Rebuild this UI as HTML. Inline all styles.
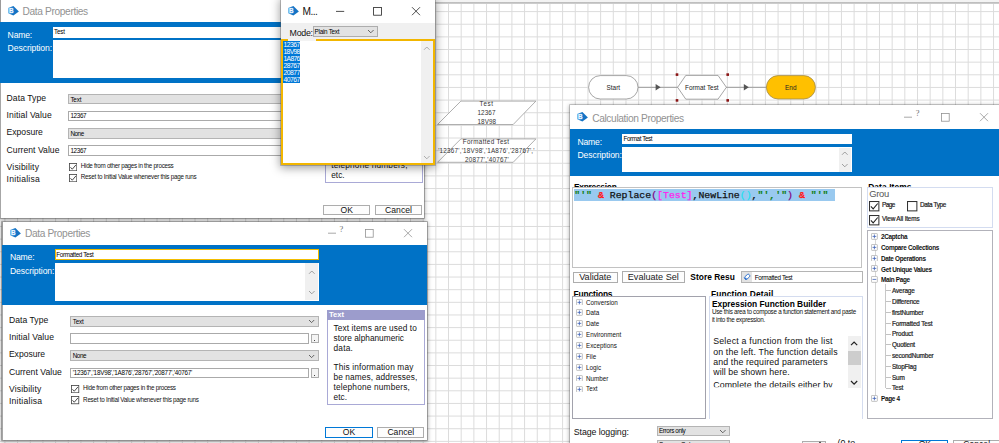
<!DOCTYPE html><html><head><meta charset="utf-8"><title>Blue Prism - Data and Calculation Properties</title><style>
html,body{margin:0;padding:0;}body{width:999px;height:443px;overflow:hidden;position:relative;background:#fff;font-family:'Liberation Sans', sans-serif;}.t{position:absolute;white-space:pre;display:block;}.win{position:absolute;background:#fff;box-shadow:0 0 0 0.8px rgba(90,90,90,.55),0 1px 4px 1px rgba(0,0,0,.32);overflow:hidden;}
</style></head><body>
<svg style="position:absolute;left:0;top:0" width="999" height="443"><path d="M4.90 0V443M17.58 0V443M30.25 0V443M42.93 0V443M55.60 0V443M68.28 0V443M80.95 0V443M93.62 0V443M106.30 0V443M118.97 0V443M131.65 0V443M144.33 0V443M157.00 0V443M169.68 0V443M182.35 0V443M195.03 0V443M207.70 0V443M220.38 0V443M233.05 0V443M245.73 0V443M258.40 0V443M271.08 0V443M283.75 0V443M296.43 0V443M309.10 0V443M321.78 0V443M334.45 0V443M347.13 0V443M359.80 0V443M372.48 0V443M385.15 0V443M397.83 0V443M410.50 0V443M423.18 0V443M435.85 0V443M448.53 0V443M461.20 0V443M473.88 0V443M486.55 0V443M499.23 0V443M511.90 0V443M524.58 0V443M537.25 0V443M549.93 0V443M562.60 0V443M575.28 0V443M587.95 0V443M600.62 0V443M613.30 0V443M625.97 0V443M638.65 0V443M651.32 0V443M664.00 0V443M676.67 0V443M689.35 0V443M702.02 0V443M714.70 0V443M727.37 0V443M740.05 0V443M752.72 0V443M765.40 0V443M778.07 0V443M790.75 0V443M803.42 0V443M816.10 0V443M828.77 0V443M841.45 0V443M854.12 0V443M866.80 0V443M879.47 0V443M892.15 0V443M904.82 0V443M917.50 0V443M930.17 0V443M942.85 0V443M955.52 0V443M968.20 0V443M980.87 0V443M993.55 0V443M0 11.60H999M0 24.24H999M0 36.88H999M0 49.52H999M0 62.16H999M0 74.80H999M0 87.44H999M0 100.08H999M0 112.72H999M0 125.36H999M0 138.00H999M0 150.64H999M0 163.28H999M0 175.92H999M0 188.56H999M0 201.20H999M0 213.84H999M0 226.48H999M0 239.12H999M0 251.76H999M0 264.40H999M0 277.04H999M0 289.68H999M0 302.32H999M0 314.96H999M0 327.60H999M0 340.24H999M0 352.88H999M0 365.52H999M0 378.16H999M0 390.80H999M0 403.44H999M0 416.08H999M0 428.72H999M0 441.36H999" stroke="#dcdcdc" stroke-width="1" fill="none"/></svg>
<div style="position:absolute;left:435px;top:0px;width:564px;height:2px;background:#f3f3f3;"></div>
<div style="position:absolute;left:435px;top:1.9px;width:564px;height:1.7px;background:linear-gradient(#b8b8b8,#d2d2d2);"></div>
<svg style="position:absolute;left:0;top:0" width="999" height="443"><line x1="638" y1="87.3" x2="678" y2="87.3" stroke="#8a8a8a" stroke-width="0.8"/><line x1="726" y1="87.3" x2="767" y2="87.3" stroke="#8a8a8a" stroke-width="0.8"/><polygon points="655.6,84 660.6,87.3 655.6,90.6" fill="#555"/><polygon points="743.8,84 748.8,87.3 743.8,90.6" fill="#555"/><rect x="588.6" y="75.6" width="49.4" height="23.4" rx="11.7" fill="#fff" stroke="#8f8f8f" stroke-width="0.8"/><polygon points="677.6,87.3 685.8,75.4 718,75.4 726.4,87.3 718,99.2 685.8,99.2" fill="#fff" stroke="#8f8f8f" stroke-width="0.8"/><rect x="675.7" y="73.3" width="2.6" height="2.6" fill="#8b1515"/><rect x="726.4000000000001" y="73.3" width="2.6" height="2.6" fill="#8b1515"/><rect x="675.7" y="99.10000000000001" width="2.6" height="2.6" fill="#8b1515"/><rect x="726.4000000000001" y="99.10000000000001" width="2.6" height="2.6" fill="#8b1515"/><rect x="766.4" y="75.6" width="49" height="23.4" rx="11.7" fill="#ffc000" stroke="#a08a50" stroke-width="0.8"/><polygon points="460.9,101.1 535.9,101.1 513.2,124.5 437.5,124.5" fill="#fff" stroke="#9a9a9a" stroke-width="0.8"/><polygon points="460.9,138.9 535.9,138.9 513.2,162.3 437.5,162.3" fill="#fff" stroke="#9a9a9a" stroke-width="0.8"/></svg>
<span class="t" style="left:613.3px;top:82.60px;line-height:10px;font-size:6.4px;color:#222;font-family:'Liberation Sans', sans-serif;transform:translateX(-50%);">Start</span>
<span class="t" style="left:701.8px;top:82.60px;line-height:10px;font-size:6.4px;color:#222;font-family:'Liberation Sans', sans-serif;transform:translateX(-50%);">Format Test</span>
<span class="t" style="left:790.8px;top:82.60px;line-height:10px;font-size:6.4px;color:#222;font-family:'Liberation Sans', sans-serif;transform:translateX(-50%);">End</span>
<span class="t" style="left:479.6px;top:98.60px;line-height:10px;font-size:6.3px;color:#333;font-family:'Liberation Sans', sans-serif;letter-spacing:0.659px;">Test</span>
<span class="t" style="left:477.4px;top:107.80px;line-height:10px;font-size:6.3px;color:#333;font-family:'Liberation Sans', sans-serif;letter-spacing:0.137px;">12367</span>
<span class="t" style="left:477.4px;top:116.90px;line-height:10px;font-size:6.3px;color:#333;font-family:'Liberation Sans', sans-serif;letter-spacing:0.116px;">18V98</span>
<span class="t" style="left:462.8px;top:136.60px;line-height:10px;font-size:6.3px;color:#333;font-family:'Liberation Sans', sans-serif;letter-spacing:0.336px;">Formatted Test</span>
<span class="t" style="left:438.2px;top:145.80px;line-height:10px;font-size:6.3px;color:#333;font-family:'Liberation Sans', sans-serif;letter-spacing:0.222px;">'12367','18V98','1A876','28767','</span>
<span class="t" style="left:465.0px;top:155.00px;line-height:10px;font-size:6.3px;color:#333;font-family:'Liberation Sans', sans-serif;letter-spacing:0.258px;">20877','40767'</span>
<div class="win" style="left:0px;top:0px;width:424.3px;height:218px;">
<svg style="position:absolute;left:7.5px;top:5.6px" width="11" height="10" viewBox="0 0 11 10"><defs><linearGradient id="ig1" x1="0" x2="1" y1="0" y2="0"><stop offset="0" stop-color="#74b6ea"/><stop offset="1" stop-color="#3089d6"/></linearGradient></defs><polygon points="1.6,1.5 5.4,0 10.9,5.5 5.4,9.6 1.4,7.7" fill="#1473c4"/><rect x="0.1" y="1.5" width="5.6" height="6.3" rx="1.2" fill="url(#ig1)"/><text x="0.9" y="6.9" font-size="6.4" font-weight="bold" font-family="Liberation Sans, sans-serif" fill="#f4faff">B</text></svg>
<span class="t" style="left:22.6px;top:3.70px;line-height:15px;font-size:10.2px;color:#929292;font-family:'Liberation Sans', sans-serif;letter-spacing:-0.372px;">Data Properties</span>
<svg style="position:absolute;left:326px;top:6.6px;overflow:visible" width="90" height="10"><line x1="0" y1="4.2" x2="8" y2="4.2" stroke="#8c8c8c" stroke-width="0.75"/><rect x="37.4" y="0.4" width="7.8" height="7.8" fill="none" stroke="#8c8c8c" stroke-width="0.75"/><path d="M76 0.2 L84 8.2 M84 0.2 L76 8.2" stroke="#8c8c8c" stroke-width="0.75" fill="none"/></svg>
<span class="t" style="left:337.3px;top:0.70px;line-height:13px;font-size:8.4px;color:#6a6a6a;font-family:'Liberation Serif', serif;">?</span>
<div style="position:absolute;left:0px;top:22.4px;width:424.3px;height:60.4px;background:#0072c6;"></div>
<span class="t" style="left:7.6px;top:28.80px;line-height:13px;font-size:8.6px;color:#fff;font-family:'Liberation Sans', sans-serif;letter-spacing:-0.163px;">Name:</span>
<span class="t" style="left:7.6px;top:42.30px;line-height:13px;font-size:8.6px;color:#fff;font-family:'Liberation Sans', sans-serif;letter-spacing:-0.073px;">Description:</span>
<div style="position:absolute;left:52.5px;top:26.8px;width:264px;height:10.9px;background:#fff;"></div>
<span class="t" style="left:54px;top:27.40px;line-height:10px;font-size:6.3px;color:#000;font-family:'Liberation Sans', sans-serif;letter-spacing:-0.216px;">Test</span>
<div style="position:absolute;left:52.5px;top:40.2px;width:264px;height:38.2px;background:#fff;"></div>
<div style="position:absolute;left:303px;top:41px;width:13px;height:36.6px;background:#f0f0f0;"></div>
<svg style="position:absolute;left:306.6px;top:48.4px;overflow:visible" width="5.6" height="2.8"><polyline points="0,2.8 2.8,0 5.6,2.8" fill="none" stroke="#8a8a8a" stroke-width="0.8"/></svg>
<svg style="position:absolute;left:306.6px;top:68.4px;overflow:visible" width="5.6" height="2.8"><polyline points="0,0 2.8,2.8 5.6,0" fill="none" stroke="#8a8a8a" stroke-width="0.8"/></svg>
<span class="t" style="left:6.6px;top:92.00px;line-height:13px;font-size:8.6px;color:#111;font-family:'Liberation Sans', sans-serif;letter-spacing:0.054px;">Data Type</span>
<div style="position:absolute;left:68px;top:93.9px;width:248.4px;height:10.6px;box-sizing:border-box;border:0.8px solid #b4b4b4;background:#e2e2e2;"></div>
<svg style="position:absolute;left:306.6px;top:98.10000000000001px;overflow:visible" width="5.2" height="2.6"><polyline points="0,0 2.6,2.6 5.2,0" fill="none" stroke="#444" stroke-width="0.8"/></svg>
<span class="t" style="left:70.4px;top:94.50px;line-height:10px;font-size:6.3px;color:#000;font-family:'Liberation Sans', sans-serif;letter-spacing:-0.166px;">Text</span>
<span class="t" style="left:6.6px;top:108.90px;line-height:13px;font-size:8.6px;color:#111;font-family:'Liberation Sans', sans-serif;letter-spacing:0.108px;">Initial Value</span>
<div style="position:absolute;left:68px;top:110.8px;width:238.6px;height:10.6px;box-sizing:border-box;border:0.8px solid #aaaaaa;background:#fff;"></div>
<div style="position:absolute;left:309px;top:111.39999999999999px;width:7.4px;height:9.6px;box-sizing:border-box;border:0.8px solid #adadad;background:#f4f4f4;"></div>
<div style="position:absolute;left:312.2px;top:117.8px;width:1px;height:1px;background:#444;"></div>
<span class="t" style="left:70.4px;top:111.40px;line-height:10px;font-size:6.3px;color:#000;font-family:'Liberation Sans', sans-serif;letter-spacing:-0.323px;">12367</span>
<span class="t" style="left:6.6px;top:126.10px;line-height:13px;font-size:8.6px;color:#111;font-family:'Liberation Sans', sans-serif;letter-spacing:-0.014px;">Exposure</span>
<div style="position:absolute;left:68px;top:128.0px;width:248.4px;height:10.6px;box-sizing:border-box;border:0.8px solid #b4b4b4;background:#e2e2e2;"></div>
<svg style="position:absolute;left:306.6px;top:132.2px;overflow:visible" width="5.2" height="2.6"><polyline points="0,0 2.6,2.6 5.2,0" fill="none" stroke="#444" stroke-width="0.8"/></svg>
<span class="t" style="left:70.4px;top:128.60px;line-height:10px;font-size:6.3px;color:#000;font-family:'Liberation Sans', sans-serif;letter-spacing:-0.416px;">None</span>
<span class="t" style="left:6.6px;top:143.50px;line-height:13px;font-size:8.6px;color:#111;font-family:'Liberation Sans', sans-serif;letter-spacing:0.039px;">Current Value</span>
<div style="position:absolute;left:68px;top:145.4px;width:238.6px;height:10.6px;box-sizing:border-box;border:0.8px solid #aaaaaa;background:#fff;"></div>
<div style="position:absolute;left:309px;top:146.0px;width:7.4px;height:9.6px;box-sizing:border-box;border:0.8px solid #adadad;background:#f4f4f4;"></div>
<div style="position:absolute;left:312.2px;top:152.4px;width:1px;height:1px;background:#444;"></div>
<span class="t" style="left:70.4px;top:146.00px;line-height:10px;font-size:6.3px;color:#000;font-family:'Liberation Sans', sans-serif;letter-spacing:-0.323px;">12367</span>
<span class="t" style="left:6.6px;top:161.10px;line-height:13px;font-size:8.6px;color:#111;font-family:'Liberation Sans', sans-serif;letter-spacing:0.161px;">Visibility</span>
<span class="t" style="left:6.6px;top:172.70px;line-height:13px;font-size:8.6px;color:#111;font-family:'Liberation Sans', sans-serif;letter-spacing:0.244px;">Initialisa</span>
<svg style="position:absolute;left:69.1px;top:162.5px" width="8.2" height="8.2" viewBox="0 0 10 10"><rect x="0.5" y="0.5" width="9" height="9" fill="#fff" stroke="#444" stroke-width="1"/><polyline points="1.8,5.2 4,7.6 8.4,2.4" fill="none" stroke="#222" stroke-width="1"/></svg>
<svg style="position:absolute;left:69.1px;top:174.1px" width="8.2" height="8.2" viewBox="0 0 10 10"><rect x="0.5" y="0.5" width="9" height="9" fill="#fff" stroke="#444" stroke-width="1"/><polyline points="1.8,5.2 4,7.6 8.4,2.4" fill="none" stroke="#222" stroke-width="1"/></svg>
<span class="t" style="left:80.8px;top:160.80px;line-height:10px;font-size:6.3px;color:#111;font-family:'Liberation Sans', sans-serif;letter-spacing:-0.296px;">Hide from other pages in the process</span>
<span class="t" style="left:80.8px;top:172.40px;line-height:10px;font-size:6.3px;color:#111;font-family:'Liberation Sans', sans-serif;letter-spacing:-0.262px;">Reset to Initial Value whenever this page runs</span>
<div style="position:absolute;left:0px;top:0px;width:1px;height:22.4px;background:#9a9a9a;"></div>
<div style="position:absolute;left:0px;top:82.8px;width:1px;height:218px;background:#a6a6a6;"></div>
<div style="position:absolute;left:325px;top:88px;width:97.6px;height:94.5px;box-sizing:border-box;border:0.8px solid #a9a9d6;background:#fff;"></div>
<div style="position:absolute;left:325px;top:88px;width:97.6px;height:9.6px;background:#9c9ccc;"></div>
<span class="t" style="left:326.6px;top:87.00px;line-height:12px;font-size:7.6px;color:#fff;font-family:'Liberation Sans', sans-serif;font-weight:bold;">Text</span>
<span class="t" style="left:331.2px;top:99.50px;line-height:13px;font-size:8.3px;color:#111;font-family:'Liberation Sans', sans-serif;letter-spacing:0.106px;">Text items are used to</span>
<span class="t" style="left:331.2px;top:109.36px;line-height:13px;font-size:8.3px;color:#111;font-family:'Liberation Sans', sans-serif;letter-spacing:-0.003px;">store alphanumeric</span>
<span class="t" style="left:331.2px;top:119.22px;line-height:13px;font-size:8.3px;color:#111;font-family:'Liberation Sans', sans-serif;letter-spacing:0.206px;">data.</span>
<span class="t" style="left:331.2px;top:138.94px;line-height:13px;font-size:8.3px;color:#111;font-family:'Liberation Sans', sans-serif;letter-spacing:0.149px;">This information may</span>
<span class="t" style="left:331.2px;top:148.80px;line-height:13px;font-size:8.3px;color:#111;font-family:'Liberation Sans', sans-serif;letter-spacing:0.118px;">be names, addresses,</span>
<span class="t" style="left:331.2px;top:158.66px;line-height:13px;font-size:8.3px;color:#111;font-family:'Liberation Sans', sans-serif;letter-spacing:0.175px;">telephone numbers,</span>
<span class="t" style="left:331.2px;top:168.52px;line-height:13px;font-size:8.3px;color:#111;font-family:'Liberation Sans', sans-serif;letter-spacing:0.031px;">etc.</span>
<div style="position:absolute;left:323px;top:204.6px;width:47.4px;height:10.8px;box-sizing:border-box;border:0.8px solid #adadad;background:#fdfdfd;"></div>
<div style="position:absolute;left:375px;top:204.6px;width:47px;height:10.8px;box-sizing:border-box;border:0.8px solid #adadad;background:#fdfdfd;"></div>
<span class="t" style="left:346.7px;top:203.70px;line-height:13px;font-size:8.6px;color:#111;font-family:'Liberation Sans', sans-serif;transform:translateX(-50%);">OK</span>
<span class="t" style="left:398.5px;top:203.70px;line-height:13px;font-size:8.6px;color:#111;font-family:'Liberation Sans', sans-serif;transform:translateX(-50%);">Cancel</span>
</div>
<div class="win" style="left:281px;top:-2px;width:154px;height:167px;box-shadow:0 0 0 0.8px rgba(90,90,90,.45),0 2px 9px 1px rgba(0,0,0,.38);">
<svg style="position:absolute;left:7.2px;top:8.3px" width="11" height="10" viewBox="0 0 11 10"><defs><linearGradient id="ig2" x1="0" x2="1" y1="0" y2="0"><stop offset="0" stop-color="#74b6ea"/><stop offset="1" stop-color="#3089d6"/></linearGradient></defs><polygon points="1.6,1.5 5.4,0 10.9,5.5 5.4,9.6 1.4,7.7" fill="#1473c4"/><rect x="0.1" y="1.5" width="5.6" height="6.3" rx="1.2" fill="url(#ig2)"/><text x="0.9" y="6.9" font-size="6.4" font-weight="bold" font-family="Liberation Sans, sans-serif" fill="#f4faff">B</text></svg>
<span class="t" style="left:21.6px;top:6.30px;line-height:15px;font-size:10.2px;color:#111;font-family:'Liberation Sans', sans-serif;letter-spacing:-0.546px;">M...</span>
<svg style="position:absolute;left:55px;top:8.8px;overflow:visible" width="90" height="10"><line x1="0" y1="4.4" x2="8.2" y2="4.4" stroke="#222" stroke-width="0.8"/><rect x="37.6" y="0.4" width="7.8" height="7.8" fill="none" stroke="#222" stroke-width="0.8"/><path d="M76 0.2 L84 8.2 M84 0.2 L76 8.2" stroke="#222" stroke-width="0.8" fill="none"/></svg>
<div style="position:absolute;left:0px;top:25px;width:154px;height:17px;background:#f0f0f0;"></div>
<span class="t" style="left:8.6px;top:29.40px;line-height:13px;font-size:8.8px;color:#111;font-family:'Liberation Sans', sans-serif;letter-spacing:-0.251px;">Mode:</span>
<div style="position:absolute;left:31.8px;top:28px;width:65px;height:11.2px;box-sizing:border-box;border:0.8px solid #adadad;background:#e2e2e2;"></div>
<span class="t" style="left:33.6px;top:29.20px;line-height:10px;font-size:6.3px;color:#000;font-family:'Liberation Sans', sans-serif;letter-spacing:-0.259px;">Plain Text</span>
<svg style="position:absolute;left:87.4px;top:32.4px;overflow:visible" width="5.6" height="2.8"><polyline points="0,0 2.8,2.8 5.6,0" fill="none" stroke="#444" stroke-width="0.8"/></svg>
<div style="position:absolute;left:0px;top:41px;width:154px;height:126px;box-sizing:border-box;border:2px solid #f2b600;background:#fff;"></div>
<div style="position:absolute;left:7px;top:41px;width:28px;height:2px;background:#f3f3f3;"></div>
<div style="position:absolute;left:139.6px;top:43px;width:12.4px;height:122.4px;background:#f0f0f0;"></div>
<svg style="position:absolute;left:143px;top:48.6px;overflow:visible" width="5.6" height="2.8"><polyline points="0,2.8 2.8,0 5.6,2.8" fill="none" stroke="#9a9a9a" stroke-width="0.8"/></svg>
<svg style="position:absolute;left:143px;top:157.6px;overflow:visible" width="5.6" height="2.8"><polyline points="0,0 2.8,2.8 5.6,0" fill="none" stroke="#9a9a9a" stroke-width="0.8"/></svg>
<div style="position:absolute;left:2px;top:43.0px;width:17.4px;height:7.0px;background:#0078d7;"></div>
<span class="t" style="left:2.5px;top:41.40px;line-height:11px;font-size:6.8px;color:#fff;font-family:'Liberation Sans', sans-serif;letter-spacing:-0.541px;">12367</span>
<div style="position:absolute;left:2px;top:50.0px;width:17.4px;height:7.0px;background:#0078d7;"></div>
<span class="t" style="left:2.5px;top:48.40px;line-height:11px;font-size:6.8px;color:#fff;font-family:'Liberation Sans', sans-serif;letter-spacing:-0.691px;">18V98</span>
<div style="position:absolute;left:2px;top:57.0px;width:17.4px;height:7.0px;background:#0078d7;"></div>
<span class="t" style="left:2.5px;top:55.40px;line-height:11px;font-size:6.8px;color:#fff;font-family:'Liberation Sans', sans-serif;letter-spacing:-0.691px;">1A876</span>
<div style="position:absolute;left:2px;top:64.0px;width:17.4px;height:7.0px;background:#0078d7;"></div>
<span class="t" style="left:2.5px;top:62.40px;line-height:11px;font-size:6.8px;color:#fff;font-family:'Liberation Sans', sans-serif;letter-spacing:-0.541px;">28767</span>
<div style="position:absolute;left:2px;top:71.0px;width:17.4px;height:7.0px;background:#0078d7;"></div>
<span class="t" style="left:2.5px;top:69.40px;line-height:11px;font-size:6.8px;color:#fff;font-family:'Liberation Sans', sans-serif;letter-spacing:-0.541px;">20877</span>
<div style="position:absolute;left:2px;top:78.0px;width:17.4px;height:7.0px;background:#0078d7;"></div>
<span class="t" style="left:2.5px;top:76.40px;line-height:11px;font-size:6.8px;color:#fff;font-family:'Liberation Sans', sans-serif;letter-spacing:-0.541px;">40767</span>
</div>
<div class="win" style="left:2.3px;top:222.4px;width:424.3px;height:218px;">
<svg style="position:absolute;left:7.5px;top:5.6px" width="11" height="10" viewBox="0 0 11 10"><defs><linearGradient id="ig3" x1="0" x2="1" y1="0" y2="0"><stop offset="0" stop-color="#74b6ea"/><stop offset="1" stop-color="#3089d6"/></linearGradient></defs><polygon points="1.6,1.5 5.4,0 10.9,5.5 5.4,9.6 1.4,7.7" fill="#1473c4"/><rect x="0.1" y="1.5" width="5.6" height="6.3" rx="1.2" fill="url(#ig3)"/><text x="0.9" y="6.9" font-size="6.4" font-weight="bold" font-family="Liberation Sans, sans-serif" fill="#f4faff">B</text></svg>
<span class="t" style="left:22.6px;top:3.70px;line-height:15px;font-size:10.2px;color:#929292;font-family:'Liberation Sans', sans-serif;letter-spacing:-0.372px;">Data Properties</span>
<svg style="position:absolute;left:326px;top:6.6px;overflow:visible" width="90" height="10"><line x1="0" y1="4.2" x2="8" y2="4.2" stroke="#8c8c8c" stroke-width="0.75"/><rect x="37.4" y="0.4" width="7.8" height="7.8" fill="none" stroke="#8c8c8c" stroke-width="0.75"/><path d="M76 0.2 L84 8.2 M84 0.2 L76 8.2" stroke="#8c8c8c" stroke-width="0.75" fill="none"/></svg>
<span class="t" style="left:337.3px;top:0.70px;line-height:13px;font-size:8.4px;color:#6a6a6a;font-family:'Liberation Serif', serif;">?</span>
<div style="position:absolute;left:0px;top:22.4px;width:424.3px;height:60.4px;background:#0072c6;"></div>
<span class="t" style="left:7.6px;top:28.80px;line-height:13px;font-size:8.6px;color:#fff;font-family:'Liberation Sans', sans-serif;letter-spacing:-0.163px;">Name:</span>
<span class="t" style="left:7.6px;top:42.30px;line-height:13px;font-size:8.6px;color:#fff;font-family:'Liberation Sans', sans-serif;letter-spacing:-0.073px;">Description:</span>
<div style="position:absolute;left:52.3px;top:26.5px;width:264.4px;height:11.5px;box-sizing:border-box;border:1.6px solid #f2bd00;background:#fff;"></div>
<span class="t" style="left:54px;top:27.40px;line-height:10px;font-size:6.3px;color:#000;font-family:'Liberation Sans', sans-serif;letter-spacing:-0.335px;">Formatted Test</span>
<div style="position:absolute;left:52.5px;top:40.2px;width:264px;height:38.2px;background:#fff;"></div>
<div style="position:absolute;left:303px;top:41px;width:13px;height:36.6px;background:#f0f0f0;"></div>
<svg style="position:absolute;left:306.6px;top:48.4px;overflow:visible" width="5.6" height="2.8"><polyline points="0,2.8 2.8,0 5.6,2.8" fill="none" stroke="#8a8a8a" stroke-width="0.8"/></svg>
<svg style="position:absolute;left:306.6px;top:68.4px;overflow:visible" width="5.6" height="2.8"><polyline points="0,0 2.8,2.8 5.6,0" fill="none" stroke="#8a8a8a" stroke-width="0.8"/></svg>
<span class="t" style="left:6.6px;top:92.00px;line-height:13px;font-size:8.6px;color:#111;font-family:'Liberation Sans', sans-serif;letter-spacing:0.054px;">Data Type</span>
<div style="position:absolute;left:68px;top:93.9px;width:248.4px;height:10.6px;box-sizing:border-box;border:0.8px solid #b4b4b4;background:#e2e2e2;"></div>
<svg style="position:absolute;left:306.6px;top:98.10000000000001px;overflow:visible" width="5.2" height="2.6"><polyline points="0,0 2.6,2.6 5.2,0" fill="none" stroke="#444" stroke-width="0.8"/></svg>
<span class="t" style="left:70.4px;top:94.50px;line-height:10px;font-size:6.3px;color:#000;font-family:'Liberation Sans', sans-serif;letter-spacing:-0.166px;">Text</span>
<span class="t" style="left:6.6px;top:108.90px;line-height:13px;font-size:8.6px;color:#111;font-family:'Liberation Sans', sans-serif;letter-spacing:0.108px;">Initial Value</span>
<div style="position:absolute;left:68px;top:110.8px;width:238.6px;height:10.6px;box-sizing:border-box;border:0.8px solid #aaaaaa;background:#fff;"></div>
<div style="position:absolute;left:309px;top:111.39999999999999px;width:7.4px;height:9.6px;box-sizing:border-box;border:0.8px solid #adadad;background:#f4f4f4;"></div>
<div style="position:absolute;left:312.2px;top:117.8px;width:1px;height:1px;background:#444;"></div>
<span class="t" style="left:6.6px;top:126.10px;line-height:13px;font-size:8.6px;color:#111;font-family:'Liberation Sans', sans-serif;letter-spacing:-0.014px;">Exposure</span>
<div style="position:absolute;left:68px;top:128.0px;width:248.4px;height:10.6px;box-sizing:border-box;border:0.8px solid #b4b4b4;background:#e2e2e2;"></div>
<svg style="position:absolute;left:306.6px;top:132.2px;overflow:visible" width="5.2" height="2.6"><polyline points="0,0 2.6,2.6 5.2,0" fill="none" stroke="#444" stroke-width="0.8"/></svg>
<span class="t" style="left:70.4px;top:128.60px;line-height:10px;font-size:6.3px;color:#000;font-family:'Liberation Sans', sans-serif;letter-spacing:-0.416px;">None</span>
<span class="t" style="left:6.6px;top:143.50px;line-height:13px;font-size:8.6px;color:#111;font-family:'Liberation Sans', sans-serif;letter-spacing:0.039px;">Current Value</span>
<div style="position:absolute;left:68px;top:145.4px;width:238.6px;height:10.6px;box-sizing:border-box;border:0.8px solid #aaaaaa;background:#fff;"></div>
<div style="position:absolute;left:309px;top:146.0px;width:7.4px;height:9.6px;box-sizing:border-box;border:0.8px solid #adadad;background:#f4f4f4;"></div>
<div style="position:absolute;left:312.2px;top:152.4px;width:1px;height:1px;background:#444;"></div>
<span class="t" style="left:70.4px;top:146.00px;line-height:10px;font-size:6.3px;color:#000;font-family:'Liberation Sans', sans-serif;letter-spacing:-0.218px;">'12367','18V98','1A876','28767','20877','40767'</span>
<span class="t" style="left:6.6px;top:161.10px;line-height:13px;font-size:8.6px;color:#111;font-family:'Liberation Sans', sans-serif;letter-spacing:0.161px;">Visibility</span>
<span class="t" style="left:6.6px;top:172.70px;line-height:13px;font-size:8.6px;color:#111;font-family:'Liberation Sans', sans-serif;letter-spacing:0.244px;">Initialisa</span>
<svg style="position:absolute;left:69.1px;top:162.5px" width="8.2" height="8.2" viewBox="0 0 10 10"><rect x="0.5" y="0.5" width="9" height="9" fill="#fff" stroke="#444" stroke-width="1"/><polyline points="1.8,5.2 4,7.6 8.4,2.4" fill="none" stroke="#222" stroke-width="1"/></svg>
<svg style="position:absolute;left:69.1px;top:174.1px" width="8.2" height="8.2" viewBox="0 0 10 10"><rect x="0.5" y="0.5" width="9" height="9" fill="#fff" stroke="#444" stroke-width="1"/><polyline points="1.8,5.2 4,7.6 8.4,2.4" fill="none" stroke="#222" stroke-width="1"/></svg>
<span class="t" style="left:80.8px;top:160.80px;line-height:10px;font-size:6.3px;color:#111;font-family:'Liberation Sans', sans-serif;letter-spacing:-0.296px;">Hide from other pages in the process</span>
<span class="t" style="left:80.8px;top:172.40px;line-height:10px;font-size:6.3px;color:#111;font-family:'Liberation Sans', sans-serif;letter-spacing:-0.262px;">Reset to Initial Value whenever this page runs</span>
<div style="position:absolute;left:0px;top:0px;width:1px;height:22.4px;background:#9a9a9a;"></div>
<div style="position:absolute;left:0px;top:82.8px;width:1px;height:218px;background:#a6a6a6;"></div>
<div style="position:absolute;left:325px;top:88px;width:97.6px;height:94.5px;box-sizing:border-box;border:0.8px solid #a9a9d6;background:#fff;"></div>
<div style="position:absolute;left:325px;top:88px;width:97.6px;height:9.6px;background:#9c9ccc;"></div>
<span class="t" style="left:326.6px;top:87.00px;line-height:12px;font-size:7.6px;color:#fff;font-family:'Liberation Sans', sans-serif;font-weight:bold;">Text</span>
<span class="t" style="left:331.2px;top:99.50px;line-height:13px;font-size:8.3px;color:#111;font-family:'Liberation Sans', sans-serif;letter-spacing:0.106px;">Text items are used to</span>
<span class="t" style="left:331.2px;top:109.36px;line-height:13px;font-size:8.3px;color:#111;font-family:'Liberation Sans', sans-serif;letter-spacing:-0.003px;">store alphanumeric</span>
<span class="t" style="left:331.2px;top:119.22px;line-height:13px;font-size:8.3px;color:#111;font-family:'Liberation Sans', sans-serif;letter-spacing:0.206px;">data.</span>
<span class="t" style="left:331.2px;top:138.94px;line-height:13px;font-size:8.3px;color:#111;font-family:'Liberation Sans', sans-serif;letter-spacing:0.149px;">This information may</span>
<span class="t" style="left:331.2px;top:148.80px;line-height:13px;font-size:8.3px;color:#111;font-family:'Liberation Sans', sans-serif;letter-spacing:0.118px;">be names, addresses,</span>
<span class="t" style="left:331.2px;top:158.66px;line-height:13px;font-size:8.3px;color:#111;font-family:'Liberation Sans', sans-serif;letter-spacing:0.175px;">telephone numbers,</span>
<span class="t" style="left:331.2px;top:168.52px;line-height:13px;font-size:8.3px;color:#111;font-family:'Liberation Sans', sans-serif;letter-spacing:0.031px;">etc.</span>
<div style="position:absolute;left:323px;top:204.6px;width:47.4px;height:10.8px;box-sizing:border-box;border:1.2px solid #0078d7;background:#fdfdfd;"></div>
<div style="position:absolute;left:375px;top:204.6px;width:47px;height:10.8px;box-sizing:border-box;border:0.8px solid #adadad;background:#fdfdfd;"></div>
<span class="t" style="left:346.7px;top:203.70px;line-height:13px;font-size:8.6px;color:#111;font-family:'Liberation Sans', sans-serif;transform:translateX(-50%);">OK</span>
<span class="t" style="left:398.5px;top:203.70px;line-height:13px;font-size:8.6px;color:#111;font-family:'Liberation Sans', sans-serif;transform:translateX(-50%);">Cancel</span>
</div>
<div class="win" style="left:569.8px;top:105.0px;width:440px;height:345px;box-shadow:0 0 0 0.8px rgba(90,90,90,.35),0 1px 4px 1px rgba(0,0,0,.28);">
<svg style="position:absolute;left:7.2px;top:7.2px" width="11" height="10" viewBox="0 0 11 10"><defs><linearGradient id="ig4" x1="0" x2="1" y1="0" y2="0"><stop offset="0" stop-color="#74b6ea"/><stop offset="1" stop-color="#3089d6"/></linearGradient></defs><polygon points="1.6,1.5 5.4,0 10.9,5.5 5.4,9.6 1.4,7.7" fill="#1473c4"/><rect x="0.1" y="1.5" width="5.6" height="6.3" rx="1.2" fill="url(#ig4)"/><text x="0.9" y="6.9" font-size="6.4" font-weight="bold" font-family="Liberation Sans, sans-serif" fill="#f4faff">B</text></svg>
<span class="t" style="left:22.4px;top:6.20px;line-height:15px;font-size:10.2px;color:#929292;font-family:'Liberation Sans', sans-serif;letter-spacing:-0.367px;">Calculation Properties</span>
<svg style="position:absolute;left:334.6px;top:8.0px;overflow:visible" width="90" height="10"><line x1="0" y1="4.2" x2="8" y2="4.2" stroke="#8c8c8c" stroke-width="0.75"/><rect x="37.4" y="0.4" width="7.8" height="7.8" fill="none" stroke="#8c8c8c" stroke-width="0.75"/><path d="M76 0.2 L84 8.2 M84 0.2 L76 8.2" stroke="#8c8c8c" stroke-width="0.75" fill="none"/></svg>
<span class="t" style="left:345.90000000000003px;top:2.10px;line-height:13px;font-size:8.4px;color:#6a6a6a;font-family:'Liberation Serif', serif;">?</span>
<div style="position:absolute;left:0px;top:24.3px;width:440px;height:47.2px;background:#0072c6;"></div>
<span class="t" style="left:7.6px;top:30.50px;line-height:13px;font-size:8.6px;color:#fff;font-family:'Liberation Sans', sans-serif;letter-spacing:-0.163px;">Name:</span>
<span class="t" style="left:7.6px;top:43.70px;line-height:13px;font-size:8.6px;color:#fff;font-family:'Liberation Sans', sans-serif;letter-spacing:-0.073px;">Description:</span>
<div style="position:absolute;left:52.4px;top:29.2px;width:229.8px;height:10.0px;background:#fff;"></div>
<span class="t" style="left:53.8px;top:29.40px;line-height:10px;font-size:6.3px;color:#000;font-family:'Liberation Sans', sans-serif;letter-spacing:-0.422px;">Format Test</span>
<div style="position:absolute;left:52.4px;top:42.0px;width:229.8px;height:25.2px;background:#fff;"></div>
<div style="position:absolute;left:268.8px;top:42.6px;width:12.8px;height:24px;background:#f0f0f0;"></div>
<svg style="position:absolute;left:272.4px;top:47.2px;overflow:visible" width="5.6" height="2.8"><polyline points="0,2.8 2.8,0 5.6,2.8" fill="none" stroke="#8a8a8a" stroke-width="0.8"/></svg>
<svg style="position:absolute;left:272.4px;top:59.2px;overflow:visible" width="5.6" height="2.8"><polyline points="0,0 2.8,2.8 5.6,0" fill="none" stroke="#8a8a8a" stroke-width="0.8"/></svg>
<span class="t" style="left:4.2px;top:75.50px;line-height:13px;font-size:8.4px;color:#000;font-family:'Liberation Sans', sans-serif;font-weight:bold;letter-spacing:-0.266px;">Expression</span>
<div style="position:absolute;left:2.2px;top:82.2px;width:290.4px;height:80.8px;box-sizing:border-box;border:0.8px solid #c2c2c2;background:#fff;"></div>
<div style="position:absolute;left:4.2px;top:84.3px;width:261px;height:11.7px;background:#99c9ef;"></div>
<span class="t" style="left:4.5px;top:85.3px;line-height:11.7px;font-size:9.86px;font-family:'Liberation Mono', monospace;white-space:pre;-webkit-text-stroke:0.25px;"><span style="color:#0a7a0a">&quot;'&quot;</span><span style="color:#111"> </span><span style="color:#ff1a1a"><b>&amp;</b></span><span style="color:#111"> Replace</span><span style="color:#800080">(</span><span style="color:#ff22ee">[Test]</span><span style="color:#111">,NewLine</span><span style="color:#20e0f0">()</span><span style="color:#111">,</span><span style="color:#0a7a0a">&quot;','&quot;</span><span style="color:#800080">)</span><span style="color:#111"> </span><span style="color:#ff1a1a"><b>&amp;</b></span><span style="color:#111"> </span><span style="color:#0a7a0a">&quot;'&quot;</span></span>
<div style="position:absolute;left:2.8px;top:166.6px;width:45.2px;height:11px;box-sizing:border-box;border:0.8px solid #adadad;background:#fdfdfd;"></div>
<span class="t" style="left:25.5px;top:165.40px;line-height:14px;font-size:9.1px;color:#222;font-family:'Liberation Sans', sans-serif;transform:translateX(-50%);">Validate</span>
<div style="position:absolute;left:52.2px;top:166.0px;width:62.8px;height:11.6px;box-sizing:border-box;border:0.8px solid #adadad;background:#fdfdfd;"></div>
<span class="t" style="left:83.5px;top:164.60px;line-height:14px;font-size:9.1px;color:#222;font-family:'Liberation Sans', sans-serif;transform:translateX(-50%);">Evaluate Sel</span>
<span class="t" style="left:120.5px;top:165.90px;line-height:13px;font-size:8.4px;color:#000;font-family:'Liberation Sans', sans-serif;font-weight:bold;letter-spacing:0.038px;">Store Resu</span>
<div style="position:absolute;left:171.2px;top:166.4px;width:122px;height:12px;box-sizing:border-box;border:0.8px solid #b4b4b4;background:#fff;"></div>
<div style="position:absolute;left:172.2px;top:167.4px;width:10.4px;height:10px;background:#e3e3e3;"></div>
<svg style="position:absolute;left:173.6px;top:168.2px" width="8" height="8" viewBox="0 0 8 8"><rect x="1.2" y="2.4" width="6" height="3.2" rx="1.3" transform="rotate(-42 4 4)" fill="#fff" stroke="#2c6fcc" stroke-width="0.9"/><path d="M2.1 6.1 L3.3 4.9" stroke="#2c6fcc" stroke-width="1.5"/></svg>
<span class="t" style="left:185.0px;top:168.00px;line-height:10px;font-size:6.3px;color:#000;font-family:'Liberation Sans', sans-serif;letter-spacing:-0.321px;">Formatted Test</span>
<span class="t" style="left:3.8px;top:183.30px;line-height:13px;font-size:8.4px;color:#000;font-family:'Liberation Sans', sans-serif;font-weight:bold;letter-spacing:-0.135px;">Functions</span>
<div style="position:absolute;left:2.2px;top:191.0px;width:133.6px;height:122.8px;box-sizing:border-box;border:0.8px solid #a2a2ac;background:#fff;"></div>
<svg style="position:absolute;left:6.70px;top:193.60px" width="6.8" height="6.8" viewBox="0 0 6.8 6.8"><rect x="0.45" y="0.45" width="5.9" height="5.9" rx="0.6" fill="#fff" stroke="#b3b3b3" stroke-width="0.8"/><line x1="1.5" y1="3.4" x2="5.3" y2="3.4" stroke="#3f62b8" stroke-width="0.8"/><line x1="3.4" y1="1.5" x2="3.4" y2="5.3" stroke="#3f62b8" stroke-width="0.8"/></svg>
<span class="t" style="left:16.2px;top:192.50px;line-height:10px;font-size:6.3px;color:#111;font-family:'Liberation Sans', sans-serif;">Conversion</span>
<svg style="position:absolute;left:6.70px;top:204.47px" width="6.8" height="6.8" viewBox="0 0 6.8 6.8"><rect x="0.45" y="0.45" width="5.9" height="5.9" rx="0.6" fill="#fff" stroke="#b3b3b3" stroke-width="0.8"/><line x1="1.5" y1="3.4" x2="5.3" y2="3.4" stroke="#3f62b8" stroke-width="0.8"/><line x1="3.4" y1="1.5" x2="3.4" y2="5.3" stroke="#3f62b8" stroke-width="0.8"/></svg>
<span class="t" style="left:16.2px;top:203.37px;line-height:10px;font-size:6.3px;color:#111;font-family:'Liberation Sans', sans-serif;">Data</span>
<svg style="position:absolute;left:6.70px;top:215.34px" width="6.8" height="6.8" viewBox="0 0 6.8 6.8"><rect x="0.45" y="0.45" width="5.9" height="5.9" rx="0.6" fill="#fff" stroke="#b3b3b3" stroke-width="0.8"/><line x1="1.5" y1="3.4" x2="5.3" y2="3.4" stroke="#3f62b8" stroke-width="0.8"/><line x1="3.4" y1="1.5" x2="3.4" y2="5.3" stroke="#3f62b8" stroke-width="0.8"/></svg>
<span class="t" style="left:16.2px;top:214.24px;line-height:10px;font-size:6.3px;color:#111;font-family:'Liberation Sans', sans-serif;">Date</span>
<svg style="position:absolute;left:6.70px;top:226.21px" width="6.8" height="6.8" viewBox="0 0 6.8 6.8"><rect x="0.45" y="0.45" width="5.9" height="5.9" rx="0.6" fill="#fff" stroke="#b3b3b3" stroke-width="0.8"/><line x1="1.5" y1="3.4" x2="5.3" y2="3.4" stroke="#3f62b8" stroke-width="0.8"/><line x1="3.4" y1="1.5" x2="3.4" y2="5.3" stroke="#3f62b8" stroke-width="0.8"/></svg>
<span class="t" style="left:16.2px;top:225.11px;line-height:10px;font-size:6.3px;color:#111;font-family:'Liberation Sans', sans-serif;">Environment</span>
<svg style="position:absolute;left:6.70px;top:237.08px" width="6.8" height="6.8" viewBox="0 0 6.8 6.8"><rect x="0.45" y="0.45" width="5.9" height="5.9" rx="0.6" fill="#fff" stroke="#b3b3b3" stroke-width="0.8"/><line x1="1.5" y1="3.4" x2="5.3" y2="3.4" stroke="#3f62b8" stroke-width="0.8"/><line x1="3.4" y1="1.5" x2="3.4" y2="5.3" stroke="#3f62b8" stroke-width="0.8"/></svg>
<span class="t" style="left:16.2px;top:235.98px;line-height:10px;font-size:6.3px;color:#111;font-family:'Liberation Sans', sans-serif;">Exceptions</span>
<svg style="position:absolute;left:6.70px;top:247.95px" width="6.8" height="6.8" viewBox="0 0 6.8 6.8"><rect x="0.45" y="0.45" width="5.9" height="5.9" rx="0.6" fill="#fff" stroke="#b3b3b3" stroke-width="0.8"/><line x1="1.5" y1="3.4" x2="5.3" y2="3.4" stroke="#3f62b8" stroke-width="0.8"/><line x1="3.4" y1="1.5" x2="3.4" y2="5.3" stroke="#3f62b8" stroke-width="0.8"/></svg>
<span class="t" style="left:16.2px;top:246.85px;line-height:10px;font-size:6.3px;color:#111;font-family:'Liberation Sans', sans-serif;">File</span>
<svg style="position:absolute;left:6.70px;top:258.82px" width="6.8" height="6.8" viewBox="0 0 6.8 6.8"><rect x="0.45" y="0.45" width="5.9" height="5.9" rx="0.6" fill="#fff" stroke="#b3b3b3" stroke-width="0.8"/><line x1="1.5" y1="3.4" x2="5.3" y2="3.4" stroke="#3f62b8" stroke-width="0.8"/><line x1="3.4" y1="1.5" x2="3.4" y2="5.3" stroke="#3f62b8" stroke-width="0.8"/></svg>
<span class="t" style="left:16.2px;top:257.72px;line-height:10px;font-size:6.3px;color:#111;font-family:'Liberation Sans', sans-serif;">Logic</span>
<svg style="position:absolute;left:6.70px;top:269.69px" width="6.8" height="6.8" viewBox="0 0 6.8 6.8"><rect x="0.45" y="0.45" width="5.9" height="5.9" rx="0.6" fill="#fff" stroke="#b3b3b3" stroke-width="0.8"/><line x1="1.5" y1="3.4" x2="5.3" y2="3.4" stroke="#3f62b8" stroke-width="0.8"/><line x1="3.4" y1="1.5" x2="3.4" y2="5.3" stroke="#3f62b8" stroke-width="0.8"/></svg>
<span class="t" style="left:16.2px;top:268.59px;line-height:10px;font-size:6.3px;color:#111;font-family:'Liberation Sans', sans-serif;">Number</span>
<svg style="position:absolute;left:6.70px;top:280.56px" width="6.8" height="6.8" viewBox="0 0 6.8 6.8"><rect x="0.45" y="0.45" width="5.9" height="5.9" rx="0.6" fill="#fff" stroke="#b3b3b3" stroke-width="0.8"/><line x1="1.5" y1="3.4" x2="5.3" y2="3.4" stroke="#3f62b8" stroke-width="0.8"/><line x1="3.4" y1="1.5" x2="3.4" y2="5.3" stroke="#3f62b8" stroke-width="0.8"/></svg>
<span class="t" style="left:16.2px;top:279.46px;line-height:10px;font-size:6.3px;color:#111;font-family:'Liberation Sans', sans-serif;">Text</span>
<span class="t" style="left:141.2px;top:183.30px;line-height:13px;font-size:8.4px;color:#000;font-family:'Liberation Sans', sans-serif;font-weight:bold;letter-spacing:0.127px;">Function Detail</span>
<div style="position:absolute;left:139.2px;top:191.0px;width:154px;height:122.8px;box-sizing:border-box;border:1px solid #d4dcef;border-bottom:none;background:#fff;"></div>
<span class="t" style="left:142.2px;top:192.80px;line-height:13px;font-size:8.4px;color:#000;font-family:'Liberation Sans', sans-serif;font-weight:bold;letter-spacing:-0.001px;">Expression Function Builder</span>
<span class="t" style="left:142.2px;top:202.40px;line-height:10px;font-size:6.3px;color:#111;font-family:'Liberation Sans', sans-serif;letter-spacing:-0.278px;">Use this area to compose a function statement and paste</span>
<span class="t" style="left:142.2px;top:209.60px;line-height:10px;font-size:6.3px;color:#111;font-family:'Liberation Sans', sans-serif;letter-spacing:-0.283px;">it into the expression.</span>
<span class="t" style="left:143.4px;top:230.40px;line-height:13px;font-size:8.8px;color:#111;font-family:'Liberation Sans', sans-serif;letter-spacing:0.211px;">Select a function from the list</span>
<span class="t" style="left:143.4px;top:240.50px;line-height:13px;font-size:8.8px;color:#111;font-family:'Liberation Sans', sans-serif;letter-spacing:0.147px;">on the left. The function details</span>
<span class="t" style="left:143.4px;top:250.60px;line-height:13px;font-size:8.8px;color:#111;font-family:'Liberation Sans', sans-serif;letter-spacing:0.129px;">and the required parameters</span>
<span class="t" style="left:143.4px;top:260.70px;line-height:13px;font-size:8.8px;color:#111;font-family:'Liberation Sans', sans-serif;letter-spacing:0.089px;">will be shown here.</span>
<div style="position:absolute;left:142.2px;top:274.0px;width:132px;height:9.2px;overflow:hidden;"></div>
<span class="t" style="left:143.4px;top:273.80px;line-height:13px;font-size:8.8px;color:#111;font-family:'Liberation Sans', sans-serif;letter-spacing:0.104px;clip-path:inset(0 0 4.6px 0);">Complete the details either by</span>
<div style="position:absolute;left:278.2px;top:231.4px;width:13px;height:52px;background:#f0f0f0;"></div>
<div style="position:absolute;left:278.2px;top:246.2px;width:13px;height:13.4px;background:#cdcdcd;"></div>
<svg style="position:absolute;left:281.2px;top:237.0px;overflow:visible" width="6.2" height="3.2"><polyline points="0,3.2 3.1,0 6.2,3.2" fill="none" stroke="#222" stroke-width="1.2"/></svg>
<svg style="position:absolute;left:281.2px;top:275.6px;overflow:visible" width="6.2" height="3.2"><polyline points="0,0 3.1,3.2 6.2,0" fill="none" stroke="#222" stroke-width="1.2"/></svg>
<span class="t" style="left:4.0px;top:320.90px;line-height:13px;font-size:8.8px;color:#111;font-family:'Liberation Sans', sans-serif;letter-spacing:-0.089px;">Stage logging:</span>
<div style="position:absolute;left:87.2px;top:320.8px;width:72.6px;height:10.6px;box-sizing:border-box;border:0.8px solid #b4b4b4;background:#e2e2e2;"></div>
<span class="t" style="left:89.2px;top:321.00px;line-height:10px;font-size:6.3px;color:#000;font-family:'Liberation Sans', sans-serif;letter-spacing:-0.368px;">Errors only</span>
<svg style="position:absolute;left:149.8px;top:325.0px;overflow:visible" width="5.6" height="2.8"><polyline points="0,0 2.8,2.8 5.6,0" fill="none" stroke="#444" stroke-width="0.8"/></svg>
<div style="position:absolute;left:87.2px;top:334.6px;width:72.6px;height:10.6px;box-sizing:border-box;border:0.8px solid #b4b4b4;background:#e2e2e2;"></div>
<span class="t" style="left:89.2px;top:334.80px;line-height:10px;font-size:6.3px;color:#000;font-family:'Liberation Sans', sans-serif;">Screen Only</span>
<div style="position:absolute;left:232.2px;top:336.0px;width:24px;height:8px;box-sizing:border-box;border:0.8px solid #adadad;background:#f4f4f4;"></div>
<svg style="position:absolute;left:247.6px;top:335.6px" width="6" height="4"><polygon points="3,0.4 5.6,4 0.4,4" fill="#222"/></svg>
<span class="t" style="left:267.7px;top:331.90px;line-height:13px;font-size:8.8px;color:#111;font-family:'Liberation Sans', sans-serif;">(0 to</span>
<div style="position:absolute;left:331.5px;top:335.4px;width:47.2px;height:10px;box-sizing:border-box;border:1.2px solid #0078d7;background:#fdfdfd;"></div>
<span class="t" style="left:355.1px;top:333.40px;line-height:13px;font-size:8.6px;color:#111;font-family:'Liberation Sans', sans-serif;transform:translateX(-50%);">OK</span>
<div style="position:absolute;left:383.4px;top:335.4px;width:47px;height:10px;box-sizing:border-box;border:0.8px solid #adadad;background:#fdfdfd;"></div>
<span class="t" style="left:406.9px;top:333.40px;line-height:13px;font-size:8.6px;color:#111;font-family:'Liberation Sans', sans-serif;transform:translateX(-50%);">Cancel</span>
<span class="t" style="left:298.4px;top:75.50px;line-height:13px;font-size:8.4px;color:#000;font-family:'Liberation Sans', sans-serif;font-weight:bold;letter-spacing:0.104px;">Data Items</span>
<div style="position:absolute;left:296.8px;top:82.0px;width:126.4px;height:40.8px;box-sizing:border-box;border:0.8px solid #d3dcf0;background:#fff;"></div>
<span class="t" style="left:299.4px;top:81.60px;line-height:14px;font-size:9.4px;color:#555;font-family:'Liberation Sans', sans-serif;letter-spacing:-0.261px;">Grou</span>
<svg style="position:absolute;left:299.5px;top:96.4px" width="10.4" height="10.4" viewBox="0 0 10 10"><rect x="0.5" y="0.5" width="9" height="9" fill="#fff" stroke="#333" stroke-width="1"/><polyline points="1.8,5.2 4,7.6 8.4,2.4" fill="none" stroke="#222" stroke-width="1"/></svg>
<span class="t" style="left:312.2px;top:95.20px;line-height:10px;font-size:6.4px;color:#222;font-family:'Liberation Sans', sans-serif;letter-spacing:-0.534px;-webkit-text-stroke:0.2px #222;">Page</span>
<svg style="position:absolute;left:337.4px;top:96.4px" width="10.4" height="10.4" viewBox="0 0 10 10"><rect x="0.5" y="0.5" width="9" height="9" fill="#fff" stroke="#333" stroke-width="1"/></svg>
<span class="t" style="left:350.2px;top:95.20px;line-height:10px;font-size:6.4px;color:#222;font-family:'Liberation Sans', sans-serif;letter-spacing:-0.335px;-webkit-text-stroke:0.2px #222;">Data Type</span>
<svg style="position:absolute;left:299.5px;top:110.4px" width="10.4" height="10.4" viewBox="0 0 10 10"><rect x="0.5" y="0.5" width="9" height="9" fill="#fff" stroke="#333" stroke-width="1"/><polyline points="1.8,5.2 4,7.6 8.4,2.4" fill="none" stroke="#222" stroke-width="1"/></svg>
<span class="t" style="left:312.2px;top:109.40px;line-height:10px;font-size:6.4px;color:#222;font-family:'Liberation Sans', sans-serif;letter-spacing:-0.155px;-webkit-text-stroke:0.2px #222;">View All Items</span>
<div style="position:absolute;left:296.8px;top:125.0px;width:126.4px;height:188.6px;box-sizing:border-box;border:1px solid #b2b2ba;background:#fff;"></div>
<div style="position:absolute;left:304.8px;top:131.4px;width:1px;height:162px;background:#d6d6d6;"></div>
<svg style="position:absolute;left:301.50px;top:128.00px" width="6.8" height="6.8" viewBox="0 0 6.8 6.8"><rect x="0.45" y="0.45" width="5.9" height="5.9" rx="0.6" fill="#fff" stroke="#b3b3b3" stroke-width="0.8"/><line x1="1.5" y1="3.4" x2="5.3" y2="3.4" stroke="#3f62b8" stroke-width="0.8"/><line x1="3.4" y1="1.5" x2="3.4" y2="5.3" stroke="#3f62b8" stroke-width="0.8"/></svg>
<span class="t" style="left:311.2px;top:127.20px;line-height:10px;font-size:6.4px;color:#111;font-family:'Liberation Sans', sans-serif;font-weight:bold;letter-spacing:-0.31px;">2Captcha</span>
<svg style="position:absolute;left:301.50px;top:138.80px" width="6.8" height="6.8" viewBox="0 0 6.8 6.8"><rect x="0.45" y="0.45" width="5.9" height="5.9" rx="0.6" fill="#fff" stroke="#b3b3b3" stroke-width="0.8"/><line x1="1.5" y1="3.4" x2="5.3" y2="3.4" stroke="#3f62b8" stroke-width="0.8"/><line x1="3.4" y1="1.5" x2="3.4" y2="5.3" stroke="#3f62b8" stroke-width="0.8"/></svg>
<span class="t" style="left:311.2px;top:138.00px;line-height:10px;font-size:6.4px;color:#111;font-family:'Liberation Sans', sans-serif;font-weight:bold;letter-spacing:-0.31px;">Compare Collections</span>
<svg style="position:absolute;left:301.50px;top:149.60px" width="6.8" height="6.8" viewBox="0 0 6.8 6.8"><rect x="0.45" y="0.45" width="5.9" height="5.9" rx="0.6" fill="#fff" stroke="#b3b3b3" stroke-width="0.8"/><line x1="1.5" y1="3.4" x2="5.3" y2="3.4" stroke="#3f62b8" stroke-width="0.8"/><line x1="3.4" y1="1.5" x2="3.4" y2="5.3" stroke="#3f62b8" stroke-width="0.8"/></svg>
<span class="t" style="left:311.2px;top:148.80px;line-height:10px;font-size:6.4px;color:#111;font-family:'Liberation Sans', sans-serif;font-weight:bold;letter-spacing:-0.31px;">Date Operations</span>
<svg style="position:absolute;left:301.50px;top:160.40px" width="6.8" height="6.8" viewBox="0 0 6.8 6.8"><rect x="0.45" y="0.45" width="5.9" height="5.9" rx="0.6" fill="#fff" stroke="#b3b3b3" stroke-width="0.8"/><line x1="1.5" y1="3.4" x2="5.3" y2="3.4" stroke="#3f62b8" stroke-width="0.8"/><line x1="3.4" y1="1.5" x2="3.4" y2="5.3" stroke="#3f62b8" stroke-width="0.8"/></svg>
<span class="t" style="left:311.2px;top:159.60px;line-height:10px;font-size:6.4px;color:#111;font-family:'Liberation Sans', sans-serif;font-weight:bold;letter-spacing:-0.31px;">Get Unique Values</span>
<svg style="position:absolute;left:301.50px;top:171.20px" width="6.8" height="6.8" viewBox="0 0 6.8 6.8"><rect x="0.45" y="0.45" width="5.9" height="5.9" rx="0.6" fill="#fff" stroke="#b3b3b3" stroke-width="0.8"/><line x1="1.5" y1="3.4" x2="5.3" y2="3.4" stroke="#3f62b8" stroke-width="0.8"/></svg>
<span class="t" style="left:311.2px;top:170.40px;line-height:10px;font-size:6.4px;color:#111;font-family:'Liberation Sans', sans-serif;font-weight:bold;letter-spacing:-0.31px;">Main Page</span>
<div style="position:absolute;left:315.8px;top:185.4px;width:5px;height:1px;background:#c2c2c2;"></div>
<span class="t" style="left:322.2px;top:181.20px;line-height:10px;font-size:6.4px;color:#222;font-family:'Liberation Sans', sans-serif;letter-spacing:-0.15px;-webkit-text-stroke:0.2px #222;">Average</span>
<div style="position:absolute;left:315.8px;top:196.2px;width:5px;height:1px;background:#c2c2c2;"></div>
<span class="t" style="left:322.2px;top:192.00px;line-height:10px;font-size:6.4px;color:#222;font-family:'Liberation Sans', sans-serif;letter-spacing:-0.15px;-webkit-text-stroke:0.2px #222;">Difference</span>
<div style="position:absolute;left:315.8px;top:207.0px;width:5px;height:1px;background:#c2c2c2;"></div>
<span class="t" style="left:322.2px;top:202.80px;line-height:10px;font-size:6.4px;color:#222;font-family:'Liberation Sans', sans-serif;letter-spacing:-0.15px;-webkit-text-stroke:0.2px #222;">firstNumber</span>
<div style="position:absolute;left:315.8px;top:217.8px;width:5px;height:1px;background:#c2c2c2;"></div>
<span class="t" style="left:322.2px;top:213.60px;line-height:10px;font-size:6.4px;color:#222;font-family:'Liberation Sans', sans-serif;letter-spacing:-0.15px;-webkit-text-stroke:0.2px #222;">Formatted Test</span>
<div style="position:absolute;left:315.8px;top:228.6px;width:5px;height:1px;background:#c2c2c2;"></div>
<span class="t" style="left:322.2px;top:224.40px;line-height:10px;font-size:6.4px;color:#222;font-family:'Liberation Sans', sans-serif;letter-spacing:-0.15px;-webkit-text-stroke:0.2px #222;">Product</span>
<div style="position:absolute;left:315.8px;top:239.4px;width:5px;height:1px;background:#c2c2c2;"></div>
<span class="t" style="left:322.2px;top:235.20px;line-height:10px;font-size:6.4px;color:#222;font-family:'Liberation Sans', sans-serif;letter-spacing:-0.15px;-webkit-text-stroke:0.2px #222;">Quotient</span>
<div style="position:absolute;left:315.8px;top:250.2px;width:5px;height:1px;background:#c2c2c2;"></div>
<span class="t" style="left:322.2px;top:246.00px;line-height:10px;font-size:6.4px;color:#222;font-family:'Liberation Sans', sans-serif;letter-spacing:-0.15px;-webkit-text-stroke:0.2px #222;">secondNumber</span>
<div style="position:absolute;left:315.8px;top:261.0px;width:5px;height:1px;background:#c2c2c2;"></div>
<span class="t" style="left:322.2px;top:256.80px;line-height:10px;font-size:6.4px;color:#222;font-family:'Liberation Sans', sans-serif;letter-spacing:-0.15px;-webkit-text-stroke:0.2px #222;">StopFlag</span>
<div style="position:absolute;left:315.8px;top:271.8px;width:5px;height:1px;background:#c2c2c2;"></div>
<span class="t" style="left:322.2px;top:267.60px;line-height:10px;font-size:6.4px;color:#222;font-family:'Liberation Sans', sans-serif;letter-spacing:-0.15px;-webkit-text-stroke:0.2px #222;">Sum</span>
<div style="position:absolute;left:315.8px;top:282.6px;width:5px;height:1px;background:#c2c2c2;"></div>
<span class="t" style="left:322.2px;top:278.40px;line-height:10px;font-size:6.4px;color:#222;font-family:'Liberation Sans', sans-serif;letter-spacing:-0.15px;-webkit-text-stroke:0.2px #222;">Test</span>
<svg style="position:absolute;left:301.50px;top:290.00px" width="6.8" height="6.8" viewBox="0 0 6.8 6.8"><rect x="0.45" y="0.45" width="5.9" height="5.9" rx="0.6" fill="#fff" stroke="#b3b3b3" stroke-width="0.8"/><line x1="1.5" y1="3.4" x2="5.3" y2="3.4" stroke="#3f62b8" stroke-width="0.8"/><line x1="3.4" y1="1.5" x2="3.4" y2="5.3" stroke="#3f62b8" stroke-width="0.8"/></svg>
<span class="t" style="left:311.2px;top:289.20px;line-height:10px;font-size:6.4px;color:#111;font-family:'Liberation Sans', sans-serif;font-weight:bold;letter-spacing:-0.31px;">Page 4</span>
<div style="position:absolute;left:315.4px;top:179.0px;width:1px;height:103.6px;background:#c8c8c8;"></div>
</div>
</body></html>
